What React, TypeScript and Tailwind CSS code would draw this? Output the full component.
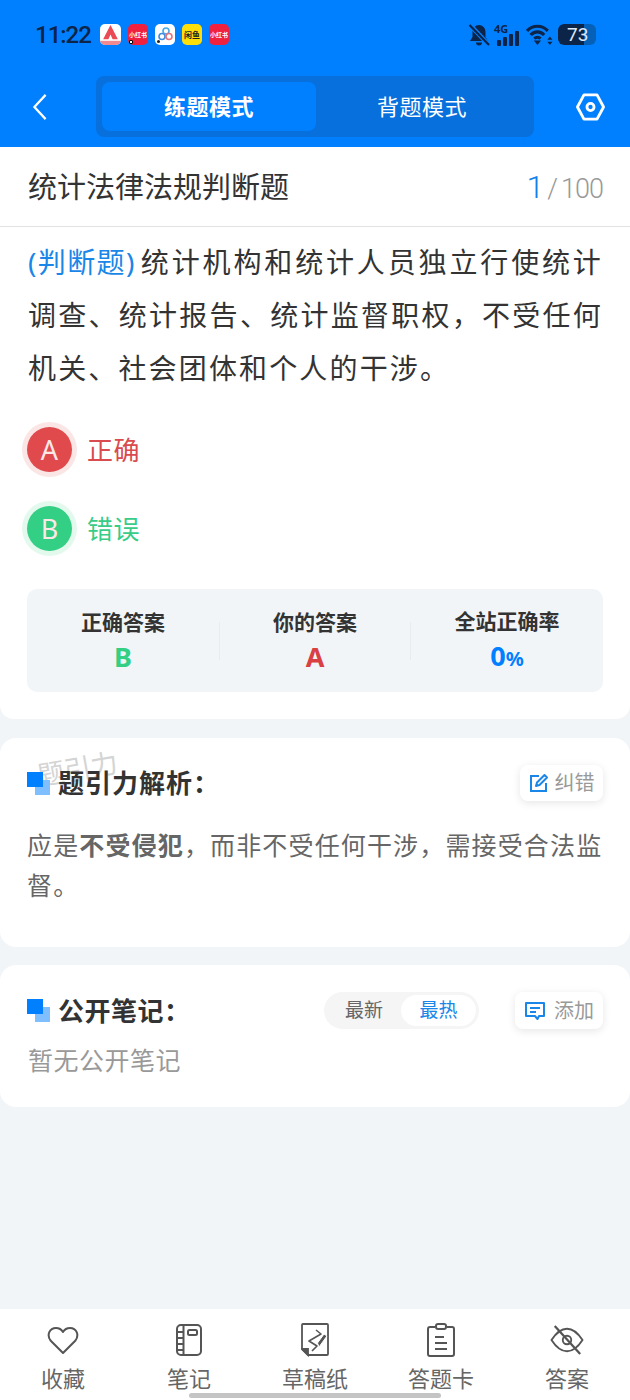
import React from 'react';

const FONT = '[font-family:"Noto_Sans","Noto_Sans_CJK_SC",sans-serif]';

const AppIcons: React.FC = () => (
  <div className="flex items-center gap-[7px]">
    <div className="relative h-[21px] w-[21px] overflow-hidden rounded-[5px] bg-white">
      <svg viewBox="0 0 20 20" className="h-[21px] w-[21px]">
        <path d="M10 1 L3 14.5 H8 L10 10 L12 14.5 H17 Z" fill="#ea4a55" />
        <rect x="0" y="16" width="20" height="4" fill="#f08a90" />
      </svg>
    </div>
    <div className="relative flex h-[21px] w-[20px] items-center justify-center rounded-[5px] bg-[#f0203f] text-[6px] leading-none font-bold whitespace-nowrap text-white">
      小红书
      <span className="absolute bottom-[1px] left-[1px] h-[4px] w-[4px] rounded-[1px] border border-black bg-white" />
    </div>
    <div className="relative h-[21px] w-[20px] overflow-hidden rounded-[5px] bg-white">
      <svg viewBox="0 0 20 20" className="h-[21px] w-[20px]" fill="none" strokeWidth="1.6">
        <circle cx="11" cy="6.5" r="3" stroke="#4aa8e8" />
        <circle cx="7" cy="12" r="3" stroke="#3f8ee0" />
        <circle cx="14" cy="12" r="3" stroke="#e8707a" />
        <circle cx="3.5" cy="17" r="1.5" fill="#222" stroke="none" />
      </svg>
    </div>
    <div className="flex h-[21px] w-[20px] items-center justify-center rounded-[5px] bg-[#ffdf0a] text-[8px] leading-none font-bold whitespace-nowrap text-[#222]">
      闲鱼
    </div>
    <div className="flex h-[21px] w-[20px] items-center justify-center rounded-[5px] bg-[#f0203f] text-[6px] leading-none font-bold whitespace-nowrap text-white">
      小红书
    </div>
  </div>
);

const StatusIcons: React.FC = () => (
  <div className="flex items-center">
    <svg viewBox="0 0 22 22" className="h-[22px] w-[22px]">
      <path d="M11 1a6.5 6.5 0 0 0-6.5 6.5V13L2 17h18l-2.5-4V7.5A6.5 6.5 0 0 0 11 1Z" fill="#0b2447" />
      <path d="M8 18.5a3 3 0 0 0 6 0Z" fill="#0b2447" />
      <path d="M1 0 L21 21" stroke="#0080ff" strokeWidth="4.5" />
      <path d="M1.5 1 L21 21" stroke="#0b2447" strokeWidth="2.2" />
    </svg>
    <div className="relative ml-[4px] h-[22px] w-[25px]">
      <span className="absolute top-[-1px] left-0 text-[11px] leading-[11px] font-bold text-[#0b2447]">4G</span>
      <div className="absolute right-0 bottom-0 flex items-end gap-[2px]">
        <span className="h-[6px] w-[4px] rounded-[1px] bg-[#0b2447]" />
        <span className="h-[9px] w-[4px] rounded-[1px] bg-[#0b2447]" />
        <span className="h-[12px] w-[4px] rounded-[1px] bg-[#0b2447]" />
        <span className="h-[15px] w-[4px] rounded-[1px] bg-[#0b2447]" />
      </div>
    </div>
    <svg viewBox="0 0 26 22" className="ml-[7px] h-[23px] w-[27px]" fill="none" stroke="#0b2447" strokeWidth="3">
      <path d="M1 7.5C6.5 1.5 15.5 1.5 21 7.5" />
      <path d="M4.5 11.5C8 7.5 14 7.5 17.5 11.5" />
      <path d="M8 15C9.8 13.2 12.2 13.2 14 15" />
      <path d="M11 21 L7.5 16.8 H14.5 Z" fill="#0b2447" stroke="none" />
      <path d="M23 13 L20.5 16 H25.5 Z M23 21 L20.5 18 H25.5 Z" fill="#0b2447" stroke="none" />
    </svg>
    <div className="relative ml-[5px] flex h-[21px] w-[38px] items-center overflow-hidden rounded-[6px] bg-[#0560b8]">
      <div className="flex h-full w-[26px] items-center rounded-l-[6px] bg-[#0b2447]" />
      <span className="absolute left-[9px] text-[19px] leading-none font-normal text-[#dce8f5] [font-family:Roboto,sans-serif]">73</span>
    </div>
  </div>
);

const Squares: React.FC = () => (
  <div className="relative h-[23px] w-[23px] shrink-0">
    <span className="absolute right-0 bottom-0 h-[15px] w-[15px] bg-[#80bfff]" />
    <span className="absolute top-0 left-0 h-[15px] w-[16px] bg-[#0080ff]" />
  </div>
);

const Option: React.FC<{ letter: string; text: string; color: string; ring: string }> = ({ letter, text, color, ring }) => (
  <div className="flex items-center">
    <div className={`flex h-[55px] w-[55px] items-center justify-center rounded-full ${ring}`}>
      <div className={`flex h-[45px] w-[45px] items-center justify-center rounded-full text-[27px] leading-none font-normal text-[#fde8e8] ${color === 'red' ? 'bg-[#e04a4d]' : 'bg-[#32cf84]'}`}>
        {letter}
      </div>
    </div>
    <span className={`ml-[10px] text-[26px] leading-none tracking-[0.4px] ${color === 'red' ? 'text-[#d94b4e]' : 'text-[#38cc88]'}`}>{text}</span>
  </div>
);

const NavItem: React.FC<{ label: string; children: React.ReactNode }> = ({ label, children }) => (
  <div className="flex w-[126px] flex-col items-center">
    <div className="flex h-[34px] items-center justify-center">{children}</div>
    <span className="mt-[8px] text-[22px] leading-[26px] text-[#666]">{label}</span>
  </div>
);

export default function App() {
  return (
    <div className={`relative flex h-[1400px] w-[630px] flex-col overflow-hidden bg-[#f2f5f8] ${FONT}`}>
      <header className="h-[147px] bg-[#0080ff]">
        <div className="flex h-[68px] items-center pt-[1px] pr-[34px] pl-[35px]">
          <span className="mr-[9px] text-[24px] leading-none font-medium tracking-[-1px] text-[#0b2447] [font-family:Roboto,sans-serif]">11:22</span>
          <AppIcons />
          <div className="ml-auto">
            <StatusIcons />
          </div>
        </div>
        <div className="flex items-center pt-[8px] pr-[24px] pl-[31px]">
          <svg viewBox="0 0 18 30" className="h-[28px] w-[18px]" fill="none" stroke="white" strokeWidth="2.4">
            <path d="M15 2 L3 15 L15 28" />
          </svg>
          <div className="ml-[47px] flex h-[61px] w-[438px] rounded-[8px] bg-[#0870dd] p-[6px]">
            <div className="flex h-[49px] w-[214px] items-center justify-center rounded-[8px] bg-[#0080ff] text-[22px] font-bold tracking-[0.5px] text-white">练题模式</div>
            <div className="flex h-[49px] flex-1 items-center justify-center text-[22px] tracking-[0.5px] text-white">背题模式</div>
          </div>
          <svg viewBox="0 0 32 30" className="ml-auto h-[28px] w-[31px]" fill="none" stroke="white" strokeWidth="3">
            <path d="M9 2 H23 L30 15 L23 28 H9 L2 15 Z" strokeLinejoin="round" />
            <circle cx="16" cy="15" r="3.8" />
          </svg>
        </div>
      </header>

      <section className="rounded-b-[14px] bg-white pb-[27px]">
        <div className="flex h-[80px] items-center justify-between border-b border-[#e2e2e2] pr-[27px] pl-[28px]">
          <h1 className="text-[29px] leading-none font-normal text-[#333]">统计法律法规判断题</h1>
          <div className="flex items-baseline text-[27px] leading-none font-light tracking-[-1px] text-[#999] [font-family:Roboto,sans-serif]">
            <span className="text-[32px] font-light text-[#0f80ee]">1</span>
            <span className="mx-[4px]">/</span>
            <span>100</span>
          </div>
        </div>
        <p className="mt-[9px] pr-[27px] pl-[28px] text-justify text-[28px] leading-[53px] tracking-[2.15px] text-[#333]">
          <span className="mr-[5px] tracking-[0.7px] text-[#1a86e8]">(判断题)</span>统计机构和统计人员独立行使统计调查、统计报告、统计监督职权，不受任何机关、社会团体和个人的干涉。
        </p>
        <div className="mt-[27px] flex flex-col gap-[24px] pl-[22px]">
          <Option letter="A" text="正确" color="red" ring="bg-[#fbe6e6]" />
          <Option letter="B" text="错误" color="green" ring="bg-[#e4f9ee]" />
        </div>
        <div className="mx-[27px] mt-[33px] flex h-[103px] items-center rounded-[10px] bg-[#f2f5f8]">
          <div className="flex w-[192px] flex-col items-center">
            <span className="text-[21px] leading-[28px] font-bold text-[#333]">正确答案</span>
            <span className="mt-[5px] text-[27px] leading-[32px] font-bold text-[#32cf84]">B</span>
          </div>
          <div className="h-[38px] w-px bg-[#e9ecef]" />
          <div className="flex w-[190px] flex-col items-center">
            <span className="text-[21px] leading-[28px] font-bold text-[#333]">你的答案</span>
            <span className="mt-[5px] text-[27px] leading-[32px] font-bold text-[#d94044]">A</span>
          </div>
          <div className="h-[38px] w-px bg-[#e9ecef]" />
          <div className="flex flex-1 flex-col items-center">
            <span className="text-[21px] leading-[28px] font-bold text-[#333]">全站正确率</span>
            <span className="mt-[5px] text-[27px] leading-[32px] font-bold text-[#0080ff]">
              0<span className="text-[20px]">%</span>
            </span>
          </div>
        </div>
      </section>

      <section className="relative mt-[19px] h-[209px] rounded-[16px] bg-white px-[27px] pt-[27px]">
        <span className="absolute top-[17px] left-[37px] -rotate-[10deg] text-[27px] leading-none font-normal text-[#d4d4d4]">题引力</span>
        <div className="flex items-center">
          <Squares />
          <h2 className="relative ml-[8px] text-[26px] leading-[36px] font-bold tracking-[1px] text-[#333]">题引力解析：</h2>
          <button className="ml-auto flex h-[36px] w-[83px] items-center justify-center rounded-[8px] bg-white shadow-[0_2px_8px_rgba(0,0,0,0.1)]">
            <svg viewBox="0 0 20 20" className="h-[20px] w-[20px]" fill="none" stroke="#1a86e8" strokeWidth="2">
              <path d="M10 3 H2 V18 H17 V10" />
              <path d="M7 13 L8 9.5 L15.5 2 L18 4.5 L10.5 12 Z" strokeLinejoin="round" />
            </svg>
            <span className="ml-[6px] text-[20px] leading-none text-[#999]">纠错</span>
          </button>
        </div>
        <p className="mt-[24px] text-[25px] leading-[40px] tracking-[1.15px] text-[#666]">
          应是<b className="font-bold">不受侵犯</b>，而非不受任何干涉，需接受合法监督。
        </p>
      </section>

      <section className="mt-[18px] h-[142px] rounded-[16px] bg-white px-[27px] pt-[27px]">
        <div className="flex items-center">
          <Squares />
          <h2 className="ml-[8px] text-[26px] leading-[36px] font-bold tracking-[0.5px] text-[#333]">公开笔记：</h2>
          <div className="ml-auto flex h-[37px] w-[155px] items-center rounded-full bg-[#f5f5f5] p-[3px]">
            <span className="flex-1 text-center text-[19px] leading-none text-[#666]">最新</span>
            <span className="flex h-[31px] w-[75px] items-center justify-center rounded-full bg-white text-[19px] leading-none text-[#1a86e8]">最热</span>
          </div>
          <button className="ml-[36px] flex h-[37px] w-[88px] items-center justify-center rounded-[8px] bg-white shadow-[0_2px_8px_rgba(0,0,0,0.1)]">
            <svg viewBox="0 0 22 20" className="h-[20px] w-[22px]" fill="none" stroke="#1a86e8" strokeWidth="2">
              <path d="M2 2 H20 V15 H15 L13.5 18 L11 15 H2 Z" strokeLinejoin="round" />
              <path d="M6 7 H16 M6 11 H12" />
            </svg>
            <span className="ml-[8px] text-[20px] leading-none text-[#999]">添加</span>
          </button>
        </div>
        <p className="mt-[15px] pl-px text-[25px] leading-[32px] tracking-[0.5px] text-[#999]">暂无公开笔记</p>
      </section>

      <nav className="mt-auto flex h-[91px] bg-white pt-[14px]">
        <NavItem label="收藏">
          <svg viewBox="0 0 32 30" className="h-[30px] w-[32px]" fill="none" stroke="#555" strokeWidth="2">
            <path d="M16 28 L3.5 15.5 C-0.5 10 2.5 3 9 3 C12 3 14.5 4.5 16 7 C17.5 4.5 20 3 23 3 C29.5 3 32.5 10 28.5 15.5 Z" strokeLinejoin="round" />
          </svg>
        </NavItem>
        <NavItem label="笔记">
          <svg viewBox="0 0 26 32" className="h-[32px] w-[26px]" fill="none" stroke="#555" strokeWidth="2">
            <rect x="1" y="1" width="24" height="30" rx="4" />
            <path d="M7.5 1 V31 M1 8 H7.5 M1 14 H7.5 M1 20 H7.5 M1 26 H7.5" />
            <rect x="12" y="6" width="9" height="5" rx="1.5" />
          </svg>
        </NavItem>
        <NavItem label="草稿纸">
          <svg viewBox="0 0 28 34" className="h-[34px] w-[28px]" fill="none" stroke="#555" strokeWidth="1.8">
            <path d="M7 32 H26 Q27 32 27 31 V2 Q27 1 26 1 H2 Q1 1 1 2 V26 Z" strokeLinejoin="round" />
            <path d="M1 26 H7 V32 Z" fill="#555" />
            <path d="M15 7 L20 11 L8 18 L16 23 L11 28" strokeWidth="1.6" strokeLinejoin="round" />
            <path d="M18 24 L26 13 L23 11 L16.5 20 Z" fill="#555" stroke="white" strokeWidth="1" />
          </svg>
        </NavItem>
        <NavItem label="答题卡">
          <svg viewBox="0 0 28 34" className="h-[34px] w-[28px]" fill="none" stroke="#555" strokeWidth="2">
            <path d="M8 4 H3 Q1 4 1 6 V31 Q1 33 3 33 H25 Q27 33 27 31 V6 Q27 4 25 4 H20" />
            <rect x="9" y="1" width="10" height="5" rx="2" />
            <path d="M8 14 H17 M8 20 H20 M8 26 H20" />
          </svg>
        </NavItem>
        <NavItem label="答案">
          <svg viewBox="0 0 36 34" className="h-[32px] w-[34px]" fill="none" stroke="#555" strokeWidth="2">
            <path d="M1.5 17 C8 7 14 5 18 5 C22 5 28 7 34.5 17 C28 27 22 29 18 29 C14 29 8 27 1.5 17 Z" strokeLinejoin="round" />
            <circle cx="18" cy="17" r="4.5" />
            <path d="M5 2 L32 32" strokeWidth="2.4" />
          </svg>
        </NavItem>
      </nav>

      <div className="absolute bottom-[2px] left-[189px] h-[5px] w-[252px] rounded-full bg-[#c4c4c4]" />
    </div>
  );
}
